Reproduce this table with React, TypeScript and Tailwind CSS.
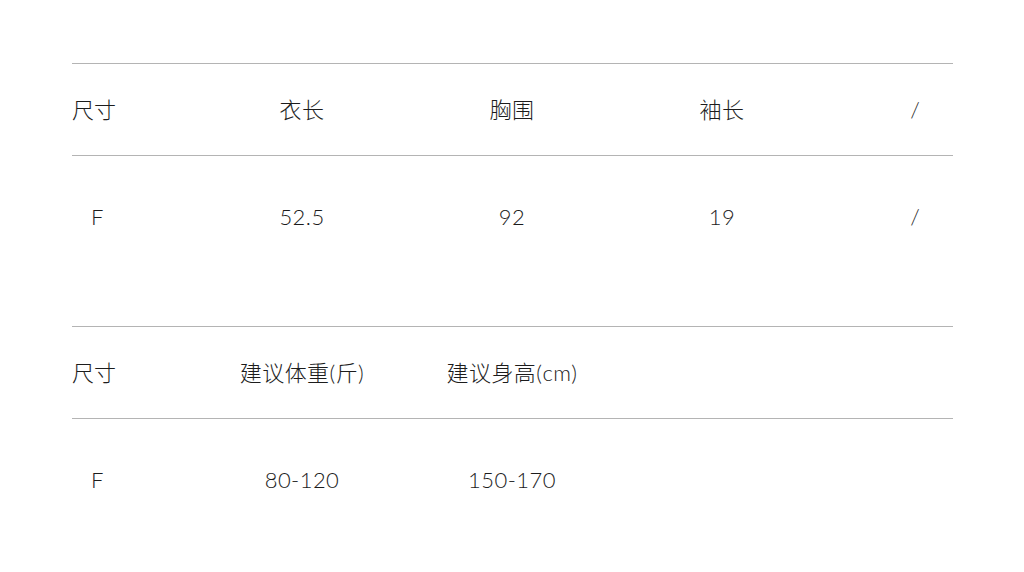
import * as React from "react"

const sizeRows = {
  head: ["尺寸", "衣长", "胸围", "袖长", "/"],
  body: ["F", "52.5", "92", "19", "/"],
}

const fitRows = {
  head: ["尺寸", "建议体重(斤)", "建议身高(cm)", "", ""],
  body: ["F", "80-120", "150-170", "", ""],
}

const cols = "grid grid-cols-[125px_210px_210px_210px_126px]"

function Cell({ text, index, body }: { text: string; index: number; body?: boolean }) {
  if (index === 0) {
    return <div className={body ? "pl-[19px]" : ""}>{text}</div>
  }
  if (index === 4) {
    return <div className="pl-[50px] text-center">{text}</div>
  }
  return <div className="text-center whitespace-nowrap tracking-[0.02em]">{text}</div>
}

function SizeTable({ head, body }: { head: string[]; body: string[] }) {
  return (
    <div>
      <div className="h-px bg-[#b4b4b4]" />
      <div className={`${cols} h-[91px] items-center`}>
        {head.map((t, i) => (
          <Cell key={i} text={t} index={i} />
        ))}
      </div>
      <div className="h-px bg-[#b4b4b4]" />
      <div className={`${cols} h-[170px] items-start pt-[46px]`}>
        {body.map((t, i) => (
          <Cell key={i} text={t} index={i} body />
        ))}
      </div>
    </div>
  )
}

export default function App() {
  return (
    <div
      className="w-[1024px] h-[572px] bg-white pt-[63px] px-[72px] text-[22px] leading-[30px] text-[#1c1c1c] font-light overflow-hidden"
      style={{ fontFamily: 'Lato, "Noto Sans CJK SC", sans-serif' }}
    >
      <div className="w-[881px]">
        <SizeTable head={sizeRows.head} body={sizeRows.body} />
        <SizeTable head={fitRows.head} body={fitRows.body} />
      </div>
    </div>
  )
}
